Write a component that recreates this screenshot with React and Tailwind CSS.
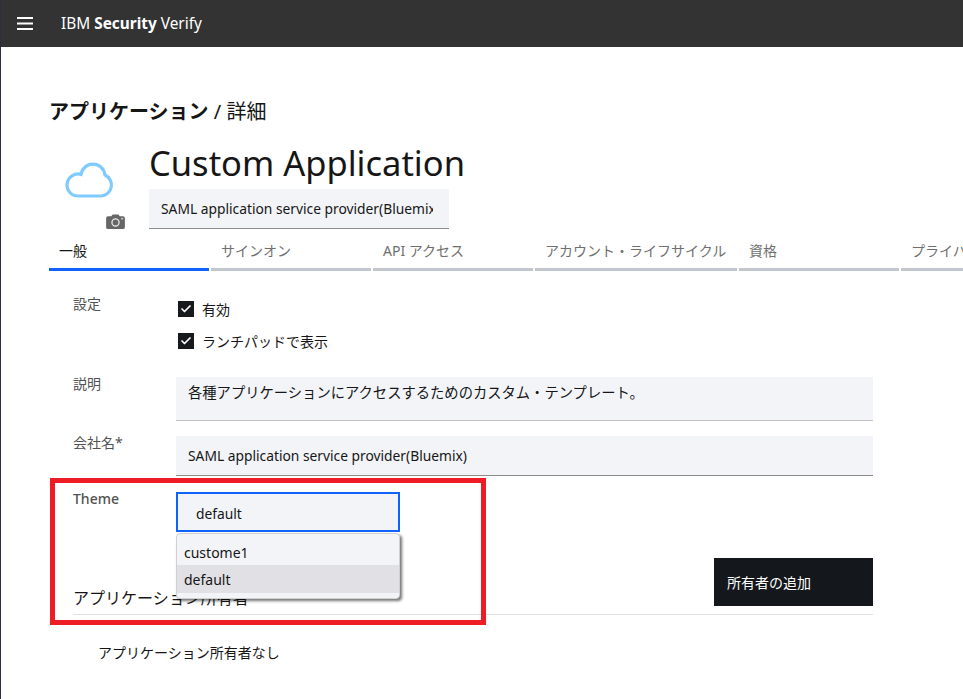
import React from "react";
import { Check } from "lucide-react";

const tabs = [
  { label: "一般", width: "w-[160px]", active: true },
  { label: "サインオン", width: "w-[160px]" },
  { label: "API アクセス", width: "w-[160px]" },
  { label: "アカウント・ライフサイクル", width: "w-[202px]" },
  { label: "資格", width: "w-[160px]" },
  { label: "プライバシー", width: "w-[160px]" },
];

const Tab = ({ label, width, active }) => (
  <div className={`${width} shrink-0 h-[41px] pl-[10px] pt-[10px] border-b-[3px] text-[14px] leading-[22px] whitespace-nowrap overflow-hidden ${active ? "border-[#0f62fe] text-[#161616]" : "border-[#c1c7cd] text-[#6f6f6f]"}`}>
    {label}
  </div>
);

const CheckRow = ({ label }) => (
  <div className="flex items-center h-[32px] gap-[8px]">
    <span className="w-4 h-4 bg-[#161a1d] flex items-center justify-center">
      <Check size={12} strokeWidth={3.5} className="text-white" />
    </span>
    <span className="text-[14px] text-[#161616]">{label}</span>
  </div>
);

const Label = ({ children, className = "" }) => (
  <div className={`w-[103px] shrink-0 -mt-[3px] text-[14px] leading-5 text-[#525252] ${className}`}>{children}</div>
);

export default function App() {
  return (
    <div className="relative w-[963px] h-[699px] overflow-hidden bg-white border-l border-[#2b2d42] font-['Noto_Sans','Noto_Sans_CJK_JP',sans-serif]">
      <div className="absolute left-[-1px] top-[85px] w-px h-[58px] bg-[#c9cad6]" />
      <header className="h-[47px] bg-[#333333] flex items-center text-white">
        <svg width="16" height="13" viewBox="0 0 16 13" className="ml-[16px] shrink-0" fill="#ffffff">
          <rect x="0" y="0" width="16" height="2" />
          <rect x="0" y="5.5" width="16" height="2" />
          <rect x="0" y="11" width="16" height="2" />
        </svg>
        <div className="ml-[28px] text-[15.4px]">
          IBM <span className="font-bold">Security</span> Verify
        </div>
      </header>

      <main className="pl-[48px] overflow-hidden">
        <h2 className="mt-[51px] text-[20px] leading-7 text-[#161616]">
          <span className="font-bold">アプリケーション</span> / 詳細
        </h2>

        <div className="flex mt-[14px]">
          <div className="w-[100px] h-[90px] shrink-0">
            <svg width="51" height="38" viewBox="0 0 51 38" fill="none" stroke="#7fcbff" strokeWidth="3.2" className="ml-[15px] mt-[21px]">
              <path d="M14 35H37A11 11 0 0 0 41 14A12.1 12.1 0 0 0 17 13.4A11 11 0 1 0 14 35Z" />
            </svg>
            <svg width="19" height="15" viewBox="0 0 20 16" className="ml-[57px] mt-[15px]">
              <path d="M2 2.5H5.5L7 .5H13L14.5 2.5H18A2 2 0 0 1 20 4.5V14A2 2 0 0 1 18 16H2A2 2 0 0 1 0 14V4.5A2 2 0 0 1 2 2.5Z" fill="#666666" />
              <circle cx="10" cy="9" r="3.8" fill="none" stroke="#e8e8e8" strokeWidth="1.4" />
              <circle cx="17" cy="5" r="0.9" fill="#e8e8e8" />
            </svg>
          </div>
          <div>
            <h1 className="text-[34.5px] leading-[46px] text-[#161616] whitespace-nowrap">Custom Application</h1>
            <div className="w-[300px] h-[40px] mt-[3px] pt-[2px] bg-[#f2f4f8] border-b border-[#8d8d8d] pl-3 pr-4 flex items-center text-[13.8px] text-[#161616] whitespace-nowrap">
              <span className="overflow-hidden">SAML application service provider(Bluemix)</span>
            </div>
          </div>
        </div>

        <nav className="flex gap-[2px]">
          {tabs.map((t) => <Tab key={t.label} {...t} />)}
        </nav>

        <section className="pl-[24px] w-[824px]">
          <div className="flex mt-[26px]">
            <Label>設定</Label>
            <div className="-mt-[4px] pl-[2px] flex flex-col">
              <CheckRow label="有効" />
              <CheckRow label="ランチパッドで表示" />
            </div>
          </div>

          <div className="flex mt-[20px]">
            <Label>説明</Label>
            <div className="flex-1 h-[44px] bg-[#f2f4f8] border-b border-[#c1c1c1] px-3 pt-[5px] text-[14.3px] text-[#161616]">
              各種アプリケーションにアクセスするためのカスタム・テンプレート。
            </div>
          </div>

          <div className="flex mt-[15px]">
            <Label>会社名*</Label>
            <div className="flex-1 h-[40px] pt-[2px] bg-[#f2f4f8] border-b border-[#8d8d8d] px-3 flex items-center text-[13.8px] text-[#161616]">
              SAML application service provider(Bluemix)
            </div>
          </div>

          <div className="flex mt-[16px]">
            <Label className="font-medium">Theme</Label>
            <div className="relative w-[224px] h-[40px] pt-[4px] bg-[#f2f4f8] border-2 border-[#0f62fe] pl-[18px] flex items-center text-[13.8px] text-[#161616]">
              default
              <div className="absolute z-10 left-[-2px] top-[39px] w-[224px] h-[66px] bg-[#f2f4f8] rounded-[4px] border border-[#d0d0d0] shadow-[2px_2px_3px_rgba(0,0,0,0.55)] pt-[5px] overflow-hidden text-[14px]">
                <div className="h-[26px] pl-[7px] flex items-center">custome1</div>
                <div className="h-[28px] pl-[7px] flex items-center bg-[#e0e0e5]">default</div>
              </div>
            </div>
          </div>

          <div className="flex justify-between items-end mt-[26px] border-b border-[#e0e0e0] pb-[8px] h-[57px]">
            <div className="-mb-[4px] text-[16px] leading-6 text-[#161616]">アプリケーション所有者</div>
            <button className="w-[159px] h-[48px] bg-[#14181c] text-white text-[14px] text-left pl-[13px]">所有者の追加</button>
          </div>

          <p className="mt-[28px] pl-[25px] text-[14px] leading-5 text-[#161616]">アプリケーション所有者なし</p>
        </section>
      </main>

      <div className="absolute left-[49px] top-[478px] w-[436px] h-[147px] border-[5px] border-[#ee1c25] z-20 pointer-events-none" />
    </div>
  );
}
